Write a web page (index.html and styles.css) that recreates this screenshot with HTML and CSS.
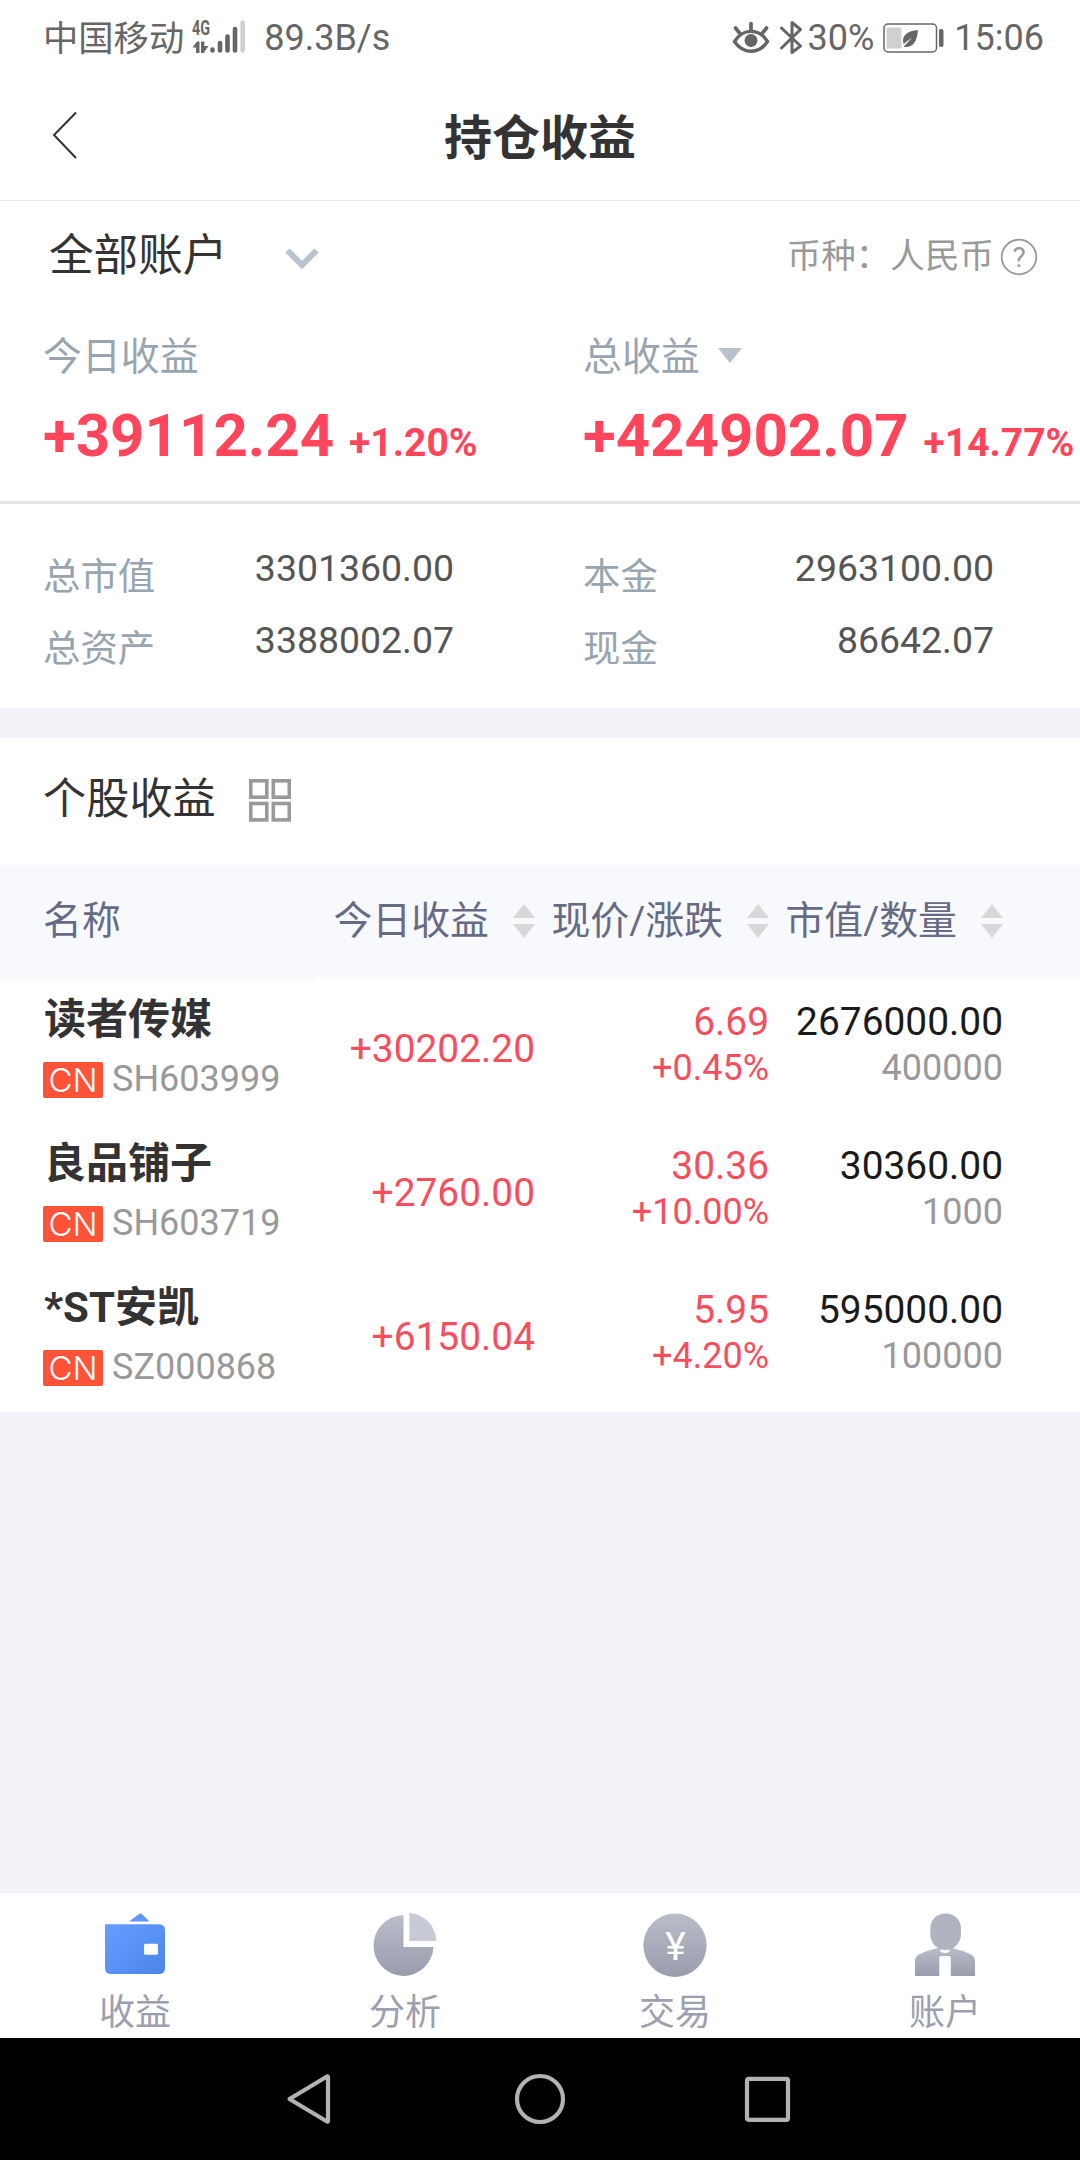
FILE: index.html
```html
<!DOCTYPE html>
<html lang="zh-CN">

<head>
  <meta charset="UTF-8">
  <meta name="viewport" content="width=device-width, initial-scale=1.0">
  <title>持仓收益</title>
  <link rel="stylesheet" href="styles.css">
</head>

<body>
  <div class="app">
    <!-- 状态栏 -->
    <div class="status">
      <span class="carrier">中国移动</span>
      <svg class="signal" width="54" height="44" viewBox="0 -4 54 44">
        <text x="0" y="15" class="net" textLength="18" lengthAdjust="spacingAndGlyphs">4G</text>
        <path d="M0.500 27.500L5 21.500h2.500v11.500H4V27.500zM9 21.500h3.300v4.500h4.200L12.300 32v1H9z" fill="#666" />
        <g stroke="#666" stroke-width="4.600" stroke-linecap="round">
          <path d="M20.500 29.500v1M28 23v7.500M35.500 16.500v14M43 9v21.500" />
          <path d="M50.700 2.500v28" stroke="#d0d0d0" />
        </g>
      </svg>
      <span class="speed">89.3B/s</span>
      <div class="status-right">
        <svg class="eye" width="38" height="36" viewBox="0 0 38 36">
          <path d="M2.500 21.500C11 8 27 8 35.500 21.500C27 34.500 11 34.500 2.500 21.500z" fill="none" stroke="#666" stroke-width="3.400" />
          <circle cx="19" cy="20.500" r="6.500" fill="#666" />
          <path d="M19 3.500v7M3.500 8l4 5M34.500 8l-4 5" stroke="#666" stroke-width="3.700" stroke-linecap="round" />
        </svg>
        <svg class="bt" width="23" height="38" viewBox="0 -1 23 38">
          <path d="M1.500 8L20.500 26L12 32.500V2.500L20.500 9.500L1.500 28" fill="none" stroke="#666" stroke-width="3" stroke-linejoin="round" stroke-linecap="round" />
        </svg>
        <span>30%</span>
        <svg class="battery" width="62" height="30" viewBox="0 0 62 30">
          <rect x="1" y="1" width="52.500" height="28" rx="4" fill="none" stroke="#666" stroke-width="1.500" />
          <rect x="3.500" y="4.500" width="15" height="21" rx="1.500" fill="#d0d0d0" />
          <path d="M35 7C25 8 18 12 20.500 21L29 14.500L20.500 24C30 25 34 19 35 7z" fill="#666" />
          <rect x="56" y="6" width="4.500" height="18" rx="2" fill="#666" />
        </svg>
        <span>15:06</span>
      </div>
    </div>

    <!-- 标题 -->
    <div class="header">
      <svg class="back" width="26" height="48" viewBox="0 0 26 48">
        <path d="M24 1.500L2 24L24 47" fill="none" stroke="#333" stroke-width="2" />
      </svg>
      <h1>持仓收益</h1>
    </div>

    <!-- 账户 -->
    <div class="account">
      <span class="account-name">全部账户</span>
      <svg class="arrow" width="34" height="22" viewBox="0 0 34 22">
        <path d="M2.500 2.500L17 17L31.500 2.500" fill="none" stroke="#b8c2cd" stroke-width="6" />
      </svg>
      <div class="currency">
        <span>币种：人民币</span>
        <svg width="38" height="38" viewBox="0 0 38 38">
          <circle cx="19" cy="19" r="17.300" fill="none" stroke="#999" stroke-width="1.800" />
          <text x="19" y="28.500" text-anchor="middle" class="ask">?</text>
        </svg>
      </div>
    </div>

    <div class="profit">
      <div class="profit-item">
        <div class="profit-label">今日收益</div>
        <div class="profit-num">+39112.24<span>+1.20%</span></div>
      </div>
      <div class="profit-item">
        <div class="profit-label">总收益<i class="caret"></i></div>
        <div class="profit-num">+424902.07<span>+14.77%</span></div>
      </div>
    </div>

    <div class="stats">
      <div class="stat"><span class="stat-label">总市值</span><span class="stat-num">3301360.00</span></div>
      <div class="stat"><span class="stat-label">本金</span><span class="stat-num">2963100.00</span></div>
      <div class="stat"><span class="stat-label">总资产</span><span class="stat-num">3388002.07</span></div>
      <div class="stat"><span class="stat-label">现金</span><span class="stat-num">86642.07</span></div>
    </div>

    <!-- 个股收益 -->
    <div class="section-title">
      <span>个股收益</span>
      <svg width="42" height="43" viewBox="0 0 42 43">
        <g fill="none" stroke="#999" stroke-width="3.600">
          <rect x="1.800" y="1.800" width="16" height="16.400" />
          <rect x="24.300" y="1.800" width="16" height="16.400" />
          <rect x="1.800" y="24.500" width="16" height="16.400" />
          <rect x="24.300" y="24.500" width="16" height="16.400" />
        </g>
      </svg>
    </div>

    <div class="table">
      <div class="names">
        <div class="th-name">名称</div>
        <div class="stock">
          <div class="stock-name">读者传媒</div>
          <div class="stock-code"><span class="cn">CN</span>SH603999</div>
        </div>
        <div class="stock">
          <div class="stock-name">良品铺子</div>
          <div class="stock-code"><span class="cn">CN</span>SH603719</div>
        </div>
        <div class="stock">
          <div class="stock-name">*ST安凯</div>
          <div class="stock-code"><span class="cn">CN</span>SZ000868</div>
        </div>
      </div>
      <div class="data">
        <div class="row th">
          <div class="cell">今日收益<i class="sort"></i></div>
          <div class="cell">现价/涨跌<i class="sort"></i></div>
          <div class="cell">市值/数量<i class="sort"></i></div>
        </div>
        <div class="row">
          <div class="cell today">+30202.20</div>
          <div class="cell price">6.69<small>+0.45%</small></div>
          <div class="cell value">2676000.00<small>400000</small></div>
        </div>
        <div class="row">
          <div class="cell today">+2760.00</div>
          <div class="cell price">30.36<small>+10.00%</small></div>
          <div class="cell value">30360.00<small>1000</small></div>
        </div>
        <div class="row">
          <div class="cell today">+6150.04</div>
          <div class="cell price">5.95<small>+4.20%</small></div>
          <div class="cell value">595000.00<small>100000</small></div>
        </div>
      </div>
    </div>

    <!-- 底部导航 -->
    <div class="tabs">
      <div class="tab">
        <svg width="70" height="66" viewBox="0 0 70 66">
          <defs>
            <linearGradient id="blue" x1="0" y1="0" x2="1" y2="1">
              <stop offset="0" stop-color="#659eff" />
              <stop offset="1" stop-color="#4b86e8" />
            </linearGradient>
            <linearGradient id="gray" x1="0" y1="0" x2="0" y2="1">
              <stop offset="0" stop-color="#b9bdca" />
              <stop offset="1" stop-color="#999cab" />
            </linearGradient>
          </defs>
          <path d="M29 9.500L39.500 1.800Q41 1 42.500 2.500L49.500 9.500z" fill="#5e97f7" />
          <path d="M5 12.300H59Q65 12.300 65 18.300V56Q65 62 59 62H11Q5 62 5 56z" fill="url(#blue)" />
          <rect x="44" y="31.700" width="14" height="11" rx="1.500" fill="#fff" />
        </svg>
        <span>收益</span>
      </div>
      <div class="tab">
        <svg width="70" height="66" viewBox="0 0 70 66">
          <path d="M33.500 3.300A30 30.300 0 1 0 63.500 35H33.500z" fill="url(#gray)" />
          <path d="M39.400 1A29 29 0 0 1 66.500 29H39.400z" fill="#c8cbd5" />
        </svg>
        <span>分析</span>
      </div>
      <div class="tab">
        <svg width="70" height="66" viewBox="0 0 70 66">
          <circle cx="35" cy="33.300" r="31.700" fill="url(#gray)" />
          <text x="35.500" y="48.300" text-anchor="middle" class="yen">¥</text>
        </svg>
        <span>交易</span>
      </div>
      <div class="tab">
        <svg width="70" height="66" viewBox="0 0 70 66">
          <path d="M5 64V49Q5 44.500 9 42.500Q18 38 28 36H42Q52 38 61 42.500Q65 44.500 65 49V64z" fill="url(#gray)" />
          <path d="M30.500 37h9v3q-4.500 2-9 0zM29.300 64V46q0-2 2-2h7.500q2 0 2 2v18z" fill="#fff" />
          <path d="M20.300 17C20.300 8 26 1.500 35.500 1.500S51 8 51 17V22C51 31 44 38 35.500 38S20.300 31 20.300 22z" fill="#b0b4c1" />
        </svg>
        <span>账户</span>
      </div>
    </div>

    <!-- 系统按键 -->
    <div class="nav">
      <svg width="52" height="54" viewBox="0 0 52 54">
        <path d="M4.500 27L42 4.500Q43 4 43 5V49Q43 50 42 49.500z" fill="none" stroke="#b2b2b2" stroke-width="4.200" stroke-linejoin="round" />
      </svg>
      <svg width="52" height="54" viewBox="0 0 52 54">
        <circle cx="26" cy="27" r="23" fill="none" stroke="#b2b2b2" stroke-width="4.200" />
      </svg>
      <svg width="52" height="54" viewBox="0 0 52 54">
        <rect x="4" y="6.800" width="41" height="41" rx="1.500" fill="none" stroke="#b2b2b2" stroke-width="4.200" />
      </svg>
    </div>
  </div>
</body>

</html>
```

FILE: styles.css
```css
* {
  box-sizing: border-box;
}

body {
  margin: 0;
  background-color: #f2f3f8;
  font-family: Roboto, 'Noto Sans CJK SC', sans-serif;
  color: #333;
}

svg {
  display: block;
  flex: none;
}

.app {
  display: flex;
  flex-direction: column;
  width: 1080px;
  height: 2160px;
  overflow: hidden;
}

/* 状态栏 */
.status {
  display: flex;
  align-items: center;
  height: 75px;
  padding: 0 36px 0 43px;
  background-color: #fff;
  color: #666;
  font-size: 36px;
  line-height: 75px;
}

.carrier {
  padding-top: 3px;
  font-size: 35.300px;
}

.signal {
  margin-left: 8px;
}

.net {
  font-family: Roboto, sans-serif;
  font-size: 21px;
  font-weight: bold;
  fill: #666;
}

.speed {
  padding-top: 1px;
  margin-left: 18px;
}

.status-right {
  display: flex;
  align-items: center;
  margin-left: auto;
  padding-top: 1px;
}

.bt {
  margin: 0 5px 0 10px;
}

.battery {
  margin: 0 9px 0 9px;
}

/* 标题 */
.header {
  position: relative;
  height: 126px;
  background-color: #fff;
  border-bottom: 1px solid #e5e5ea;
}

.header h1 {
  margin: 0;
  font-size: 48px;
  line-height: 127px;
  text-align: center;
}

.back {
  position: absolute;
  left: 52px;
  top: 36px;
}

/* 账户 */
.account {
  display: flex;
  align-items: center;
  height: 110px;
  padding: 0 42px 0 49px;
  background-color: #fff;
  line-height: 110px;
}

.account-name {
  font-size: 44.600px;
}

.arrow {
  margin: 6px 0 0 58px;
}

.currency {
  display: flex;
  align-items: center;
  margin-left: auto;
  color: #999;
  font-size: 34.560px;
}

.currency svg {
  margin: 2px 0 0 6px;
}

.ask {
  font-family: Roboto, sans-serif;
  font-size: 28px;
  fill: #999;
}

.profit {
  display: flex;
  height: 193px;
  padding-top: 18px;
  background-color: #fff;
  border-bottom: 3px solid #e6e6e6;
}

.profit-item {
  width: 540px;
  padding-left: 43px;
  white-space: nowrap;
}

.profit-label {
  display: flex;
  align-items: center;
  color: #98a4b0;
  font-size: 38.880px;
  line-height: 55px;
}

.caret {
  margin: -3px 0 0 18px;
  border: 12px solid transparent;
  border-top: 15px solid #b8c2cd;
  border-bottom: 0;
}

.profit-num {
  margin-top: 22px;
  color: #ff455b;
  font-size: 60px;
  font-weight: bold;
  line-height: 60px;
}

.profit-num span {
  margin-left: 15px;
  font-size: 39px;
  line-height: 1;
}

.stats {
  display: flex;
  flex-wrap: wrap;
  padding: 37px 0 23px;
  background-color: #fff;
}

.stat {
  display: flex;
  justify-content: space-between;
  width: 540px;
  padding: 0 86px 0 43px;
  font-size: 37.440px;
}

.stat-label {
  color: #98a4b0;
  line-height: 72px;
}

.stat-num {
  color: #555;
  line-height: 54px;
}

/* 个股收益 */
.section-title {
  display: flex;
  align-items: center;
  height: 127px;
  margin-top: 30px;
  padding: 0 0 3px 43px;
  background-color: #fff;
  font-size: 43.200px;
  line-height: 124px;
}

.section-title svg {
  margin-left: 33px;
}

.table {
  display: flex;
  height: 547px;
  background-color: #fff;
}

.names {
  width: 317px;
}

.th-name {
  height: 115px;
  padding-left: 43px;
  background-color: #f8f9fd;
  color: #666b85;
  font-size: 38.880px;
  line-height: 112px;
}

.stock {
  height: 144px;
  padding: 15px 0 0 43px;
}

.stock-name {
  padding-left: 1px;
  font-size: 42px;
  font-weight: bold;
  line-height: 50px;
}

.stock-code {
  display: flex;
  margin-top: 16px;
  color: #999;
  font-size: 36px;
  line-height: 36px;
}

.cn {
  width: 60px;
  height: 36px;
  margin: 1px 9px 0 0;
  border-radius: 2px;
  background-color: #ff5339;
  color: #fff;
  font-family: Inter, 'Liberation Sans', sans-serif;
  font-size: 33px;
  font-weight: 300;
  line-height: 36px;
  text-align: center;
}

.data {
  width: 763px;
}

.row {
  display: flex;
  height: 144px;
  font-size: 38.880px;
}

.cell {
  width: 234px;
  text-align: right;
  white-space: nowrap;
}

.cell:first-child {
  width: 218px;
}

.th {
  height: 112px;
  background-color: #f8f9fd;
  color: #666b85;
  line-height: 112px;
}

.th .cell {
  display: flex;
  align-items: center;
  justify-content: flex-end;
}

.sort {
  margin-left: 24px;
}

.sort:before,
.sort:after {
  content: "";
  display: block;
  border: 11.500px solid transparent;
}

.sort:before {
  border-top: 0;
  border-bottom: 14px solid #d8d8d8;
}

.sort:after {
  margin-top: 6px;
  border-bottom: 0;
  border-top: 14px solid #d8d8d8;
}

.today {
  color: #f64e5e;
  line-height: 143px;
}

.price,
.value {
  padding-top: 21px;
  line-height: 47px;
}

.price {
  color: #f64e5e;
}

.value {
  color: #1a1a1a;
}

.cell small {
  display: block;
  font-size: 36px;
}

.value small {
  color: #999;
}

/* 底部导航 */
.tabs {
  display: flex;
  height: 145px;
  margin-top: auto;
  background-color: #fff;
}

.tab {
  display: flex;
  flex-direction: column;
  align-items: center;
  width: 270px;
  padding-top: 19px;
  color: #9b9fae;
  font-size: 36px;
  line-height: 48px;
}

.tab span {
  margin-top: 11px;
}

.yen {
  font-family: Roboto, sans-serif;
  font-size: 39px;
  fill: #fff;
}

.nav {
  display: flex;
  align-items: center;
  justify-content: center;
  gap: 177px;
  height: 122px;
  background-color: #000;
}
```
